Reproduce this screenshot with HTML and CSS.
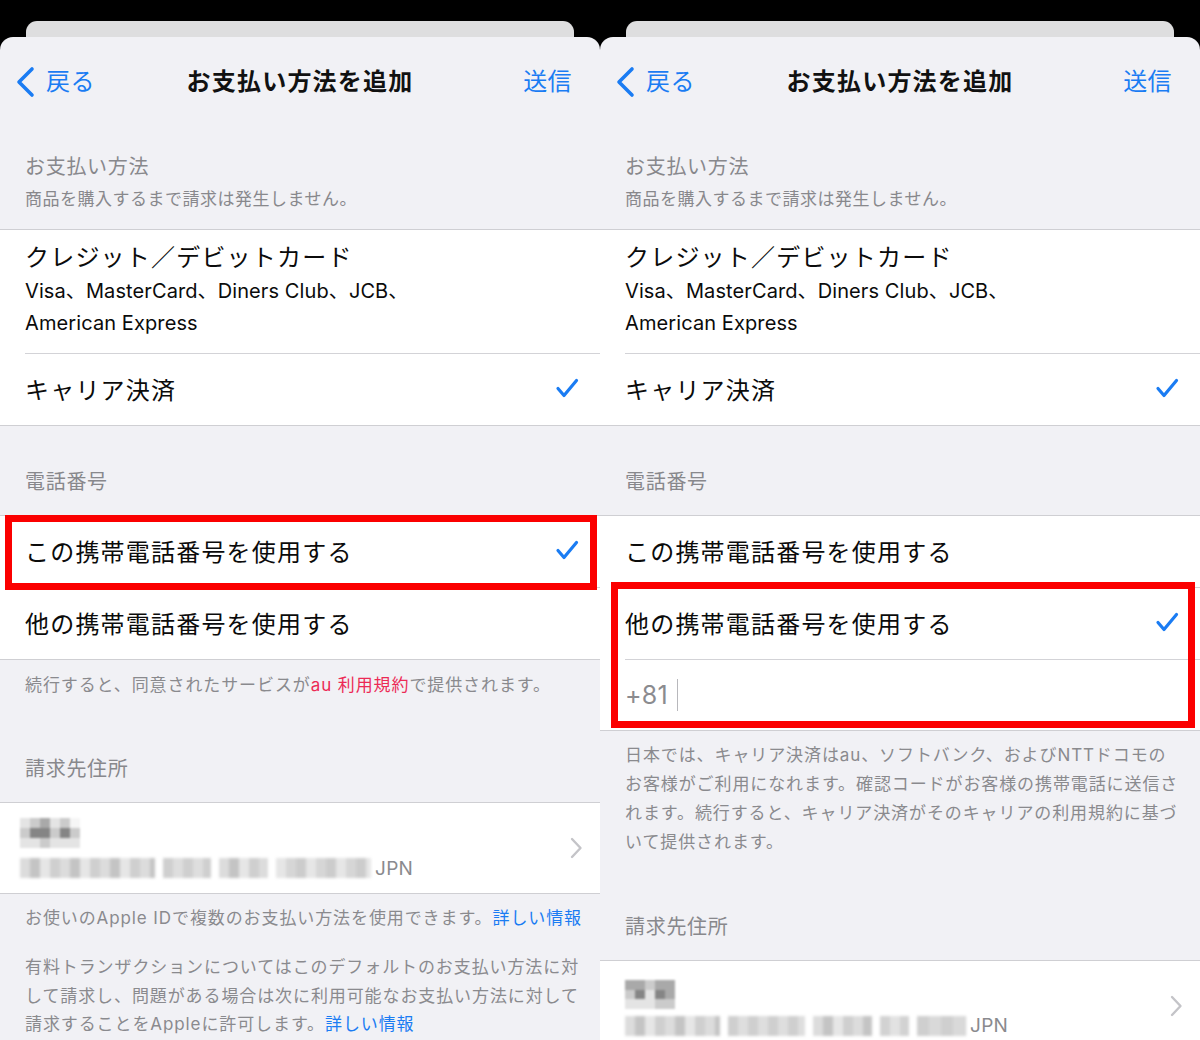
FILE: index.html
```html
<!DOCTYPE html>
<html lang="ja">
<head>
<meta charset="utf-8">
<title>お支払い方法を追加</title>
<link rel="stylesheet" href="styles.css">
</head>
<body>
<div class="shots">

  <!-- LEFT PANEL -->
  <div class="panel">
    <div class="backcard"></div>
    <div class="sheet">
      <div class="nav">
        <div class="nav-back">
          <svg class="back-chev" width="20" height="32" viewBox="0 0 20 32"><path d="M17 3 L4 16 L17 29" fill="none" stroke="currentColor" stroke-width="3.6" stroke-linecap="round" stroke-linejoin="round"/></svg>
          <span>戻る</span>
        </div>
        <div class="nav-title">お支払い方法を追加</div>
        <div class="nav-send">送信</div>
      </div>

      <div class="sec-head sec-first">
        <div class="sec-title">お支払い方法</div>
        <div class="sec-sub">商品を購入するまで請求は発生しません。</div>
      </div>
      <div class="group">
        <div class="cell cell-card">
          <div class="card-title">クレジット／デビットカード</div>
          <div class="card-sub">Visa、MasterCard、Diners Club、JCB、</div>
          <div class="card-sub">American Express</div>
        </div>
        <div class="cell cell-row">
          <span>キャリア決済</span>
          <svg class="check" width="24" height="22" viewBox="0 0 24 22"><path d="M3 11.5 L9 18.5 L21.5 3.5" fill="none" stroke="currentColor" stroke-width="3.2" stroke-linecap="round" stroke-linejoin="round"/></svg>
        </div>
      </div>

      <div class="sec-head sec-phone">
        <div class="sec-title">電話番号</div>
      </div>
      <div class="group">
        <div class="cell cell-row">
          <span>この携帯電話番号を使用する</span>
          <svg class="check" width="24" height="22" viewBox="0 0 24 22"><path d="M3 11.5 L9 18.5 L21.5 3.5" fill="none" stroke="currentColor" stroke-width="3.2" stroke-linecap="round" stroke-linejoin="round"/></svg>
        </div>
        <div class="cell cell-row">
          <span>他の携帯電話番号を使用する</span>
        </div>
      </div>
      <div class="footnote">続行すると、同意されたサービスが<span class="red-link">au 利用規約</span>で提供されます。</div>

      <div class="sec-head sec-addr">
        <div class="sec-title">請求先住所</div>
      </div>
      <div class="group">
        <div class="cell cell-addr">
          <div class="addr-text">
            <div class="pix-name">
              <i class="p1"></i><i class="p2"></i><i class="p3"></i><i class="p1"></i><i class="p2"></i><i class="p0"></i>
              <i class="p2"></i><i class="p4"></i><i class="p4"></i><i class="p2"></i><i class="p4"></i><i class="p2"></i>
              <i class="p1"></i><i class="p1"></i><i class="p2"></i><i class="p1"></i><i class="p1"></i><i class="p1"></i>
            </div>
            <div class="addr-line">
              <span class="pix-seg seg-a"></span><span class="pix-seg seg-b"></span><span class="pix-seg seg-c"></span><span class="pix-seg seg-d"></span>
              <span class="jpn">JPN</span>
            </div>
          </div>
          <svg class="disc" width="14" height="22" viewBox="0 0 14 22"><path d="M3 2 L11.5 11 L3 20" fill="none" stroke="currentColor" stroke-width="2.4" stroke-linecap="round" stroke-linejoin="round"/></svg>
        </div>
      </div>
      <div class="footnote fn-apple">お使いのApple IDで複数のお支払い方法を使用できます。<span class="blue-link">詳しい情報</span></div>
      <p class="footnote para">有料トランザクションについてはこのデフォルトのお支払い方法に対<br>して請求し、問題がある場合は次に利用可能なお支払い方法に対して<br>請求することをAppleに許可します。<span class="blue-link">詳しい情報</span></p>
    </div>
    <div class="highlight hl-left"></div>
  </div>

  <!-- RIGHT PANEL -->
  <div class="panel">
    <div class="backcard"></div>
    <div class="sheet">
      <div class="nav">
        <div class="nav-back">
          <svg class="back-chev" width="20" height="32" viewBox="0 0 20 32"><path d="M17 3 L4 16 L17 29" fill="none" stroke="currentColor" stroke-width="3.6" stroke-linecap="round" stroke-linejoin="round"/></svg>
          <span>戻る</span>
        </div>
        <div class="nav-title">お支払い方法を追加</div>
        <div class="nav-send">送信</div>
      </div>

      <div class="sec-head sec-first">
        <div class="sec-title">お支払い方法</div>
        <div class="sec-sub">商品を購入するまで請求は発生しません。</div>
      </div>
      <div class="group">
        <div class="cell cell-card">
          <div class="card-title">クレジット／デビットカード</div>
          <div class="card-sub">Visa、MasterCard、Diners Club、JCB、</div>
          <div class="card-sub">American Express</div>
        </div>
        <div class="cell cell-row">
          <span>キャリア決済</span>
          <svg class="check" width="24" height="22" viewBox="0 0 24 22"><path d="M3 11.5 L9 18.5 L21.5 3.5" fill="none" stroke="currentColor" stroke-width="3.2" stroke-linecap="round" stroke-linejoin="round"/></svg>
        </div>
      </div>

      <div class="sec-head sec-phone">
        <div class="sec-title">電話番号</div>
      </div>
      <div class="group">
        <div class="cell cell-row">
          <span>この携帯電話番号を使用する</span>
        </div>
        <div class="cell cell-row">
          <span>他の携帯電話番号を使用する</span>
          <svg class="check" width="24" height="22" viewBox="0 0 24 22"><path d="M3 11.5 L9 18.5 L21.5 3.5" fill="none" stroke="currentColor" stroke-width="3.2" stroke-linecap="round" stroke-linejoin="round"/></svg>
        </div>
        <div class="cell cell-input">
          <span class="prefix">+81</span><span class="caret"></span>
        </div>
      </div>
      <p class="footnote para para-r">日本では、キャリア決済はau、ソフトバンク、およびNTTドコモの<br>お客様がご利用になれます。確認コードがお客様の携帯電話に送信さ<br>れます。続行すると、キャリア決済がそのキャリアの利用規約に基づ<br>いて提供されます。</p>

      <div class="sec-head sec-addr">
        <div class="sec-title">請求先住所</div>
      </div>
      <div class="group">
        <div class="cell cell-addr cell-addr-r">
          <div class="addr-text">
            <div class="pix-name pix-name-r">
              <i class="p3"></i><i class="p3"></i><i class="p2"></i><i class="p3"></i><i class="p3"></i>
              <i class="p2"></i><i class="p4"></i><i class="p1"></i><i class="p4"></i><i class="p3"></i>
              <i class="p1"></i><i class="p1"></i><i class="p1"></i><i class="p2"></i><i class="p2"></i>
            </div>
            <div class="addr-line">
              <span class="pix-seg seg-e"></span><span class="pix-seg seg-f"></span><span class="pix-seg seg-g"></span><span class="pix-seg seg-h"></span><span class="pix-seg seg-i"></span>
              <span class="jpn">JPN</span>
            </div>
          </div>
          <svg class="disc" width="14" height="22" viewBox="0 0 14 22"><path d="M3 2 L11.5 11 L3 20" fill="none" stroke="currentColor" stroke-width="2.4" stroke-linecap="round" stroke-linejoin="round"/></svg>
        </div>
      </div>
    </div>
    <div class="highlight hl-right"></div>
  </div>

</div>
</body>
</html>
```

FILE: styles.css
```css
* { box-sizing: border-box; }

html, body {
  margin: 0;
  padding: 0;
  background: #000;
}

body {
  font-family: "Inter", "Noto Sans CJK JP", sans-serif;
  color: #0b0b0b;
  width: 1200px;
  height: 1040px;
  overflow: hidden;
}

.shots {
  display: flex;
  width: 1200px;
  height: 1040px;
}

.panel {
  position: relative;
  width: 600px;
  height: 1040px;
  overflow: hidden;
  display: flex;
  flex-direction: column;
  padding-top: 21px;
}

.backcard {
  margin: 0 26px;
  height: 16px;
  background: #dededf;
  border-radius: 11px 11px 0 0;
  flex: none;
}

.sheet {
  flex: 1;
  background: #f1f1f5;
  border-radius: 13px 13px 0 0;
}

/* nav */
.nav {
  height: 90px;
  display: grid;
  grid-template-columns: 1fr auto 1fr;
  align-items: center;
  padding: 0 15px;
  line-height: 32px;
}

.nav-back {
  display: flex;
  align-items: center;
  gap: 11px;
  color: #1a7cf3;
  font-size: 24px;
  letter-spacing: 0.6px;
}

.back-chev { display: block; }

.nav-title {
  font-size: 24px;
  font-weight: 700;
  letter-spacing: 1.2px;
  color: #111;
}

.nav-send {
  justify-self: end;
  margin-right: 13px;
  color: #1a7cf3;
  font-size: 24px;
  letter-spacing: 0.4px;
}

/* section headers */
.sec-head {
  padding-left: 25px;
  color: #88888c;
}

.sec-title {
  font-size: 20px;
  line-height: 28px;
  letter-spacing: 0.7px;
}

.sec-sub {
  margin-top: 4px;
  font-size: 17px;
  line-height: 28px;
  letter-spacing: 0.5px;
}

.sec-first { padding-top: 26px; padding-bottom: 16px; }
.sec-phone { padding-top: 42px; padding-bottom: 19px; }
.sec-addr  { padding-top: 56px; padding-bottom: 19px; }

/* groups */
.group {
  background: #fff;
  border-top: 1px solid #cfcfd3;
  border-bottom: 1px solid #cfcfd3;
}

.cell {
  margin-left: 25px;
  padding-right: 23px;
}

.cell + .cell {
  border-top: 1px solid #d3d3d7;
}

.cell-card {
  padding-top: 11px;
  padding-bottom: 14px;
}

.card-title {
  font-size: 24px;
  line-height: 34px;
  letter-spacing: 1.2px;
}

.card-sub {
  font-size: 20px;
  line-height: 32px;
  letter-spacing: 0.1px;
}

.cell-row {
  box-sizing: content-box;
  height: 68px;
  padding-bottom: 3px;
  display: flex;
  align-items: center;
  justify-content: space-between;
  font-size: 24px;
  letter-spacing: 1.2px;
}

.check {
  display: block;
  color: #1a7cf3;
  margin-right: -2px;
}

.cell-input {
  box-sizing: content-box;
  height: 70px;
  display: flex;
  align-items: center;
}

.prefix {
  font-size: 25px;
  color: #8b8b8f;
  letter-spacing: 0.2px;
}

.caret {
  display: block;
  width: 1.5px;
  height: 32px;
  margin-left: 9px;
  background: #b8b8bc;
}

/* footnotes */
.footnote {
  padding: 11px 0 0 25px;
  font-size: 17px;
  line-height: 28px;
  letter-spacing: 0.9px;
  color: #8a8a8e;
  white-space: nowrap;
}

.fn-apple { padding-top: 10px; }

.para {
  margin: 21px 0 0 0;
  padding-top: 0;
  line-height: 28.5px;
}

.para-r {
  margin-top: 0;
  padding-top: 10px;
  line-height: 29px;
}

.red-link { color: #ec2a55; }
.blue-link { color: #1a7cf3; }

/* address */
.cell-addr {
  height: 90px;
  display: flex;
  align-items: center;
  justify-content: space-between;
  margin-left: 20px;
  padding-right: 17px;
}

.addr-text {
  display: flex;
  flex-direction: column;
  gap: 8px;
  padding-top: 2px;
}

.pix-name {
  display: grid;
  grid-template-columns: repeat(6, 10px);
  grid-auto-rows: 10px;
  width: 60px;
  filter: blur(1.2px);
}

.pix-name-r {
  grid-template-columns: repeat(5, 10px);
  grid-auto-rows: 9.5px;
  width: 50px;
  margin-left: 5px;
}

.pix-name i { display: block; }
.p0 { background: #f6f6f6; }
.p1 { background: #e4e4e4; }
.p2 { background: #cbcbcb; }
.p3 { background: #a9a9a9; }
.p4 { background: #858585; }

.addr-line {
  display: flex;
  align-items: center;
  height: 24px;
}

.pix-seg {
  display: block;
  height: 20px;
  margin-right: 8px;
  filter: blur(1.5px);
  background: repeating-linear-gradient(90deg, #dcdcdc 0 10px, #c4c4c4 10px 20px, #e6e6e6 20px 30px, #cfcfcf 30px 40px);
}

.seg-a { width: 135px; }
.seg-b { width: 48px; background: repeating-linear-gradient(90deg, #cfcfcf 0 10px, #dedede 10px 20px); }
.seg-c { width: 49px; }
.seg-d { width: 95px; background: repeating-linear-gradient(90deg, #e6e6e6 0 10px, #d6d6d6 10px 20px, #cccccc 20px 30px); }

.seg-e { width: 95px; margin-left: 5px; }
.seg-f { width: 77px; background: repeating-linear-gradient(90deg, #cfcfcf 0 10px, #dedede 10px 20px); }
.seg-g { width: 59px; }
.seg-h { width: 29px; background: repeating-linear-gradient(90deg, #d2d2d2 0 10px, #e2e2e2 10px 20px); }
.seg-i { width: 49px; background: repeating-linear-gradient(90deg, #cfcfcf 0 12px, #d9d9d9 12px 24px); }

.jpn {
  font-size: 19px;
  color: #8a8a8e;
  margin-left: -4px;
  letter-spacing: 0.3px;
}

.disc {
  display: block;
  align-self: center;
  color: #c4c4c8;
}

.cell-addr-r { align-items: flex-start; }
.cell-addr-r .addr-text { padding-top: 19px; gap: 5px; }

/* red annotation boxes (overlay) */
.highlight {
  position: absolute;
  border: 7px solid #fb0000;
  pointer-events: none;
}

.hl-left {
  left: 5px;
  top: 515px;
  width: 592px;
  height: 75px;
}

.hl-right {
  left: 11px;
  top: 582px;
  width: 584px;
  height: 146px;
}
```
